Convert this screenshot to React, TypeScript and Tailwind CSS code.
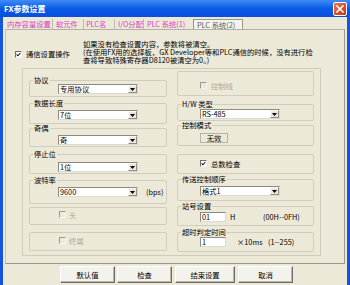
import React from "react";

const FONT = "font-['Noto_Sans_CJK_SC','Noto_Sans_CJK_JP',sans-serif]";

function CheckBox({ checked = false, disabled = false }: { checked?: boolean; disabled?: boolean }) {
  return (
    <span
      className={
        disabled
          ? "flex h-[7px] w-[7px] shrink-0 border border-t-[#9d9a8c] border-l-[#9d9a8c] border-b-[#f7f6f0] border-r-[#f7f6f0] bg-[#ebe9dd]"
          : "flex h-[7px] w-[7px] shrink-0 border border-t-[#6e6c64] border-l-[#6e6c64] border-b-[#f4f4f0] border-r-[#f4f4f0] bg-white"
      }
    >
      {checked && (
        <svg width="5" height="5" viewBox="0 0 5 5" className="block">
          <path d="M0.6 2.4 L1.9 3.8 L4.4 1" stroke="#111" strokeWidth="1.1" fill="none" />
        </svg>
      )}
    </span>
  );
}

function Combo({ value }: { value: string }) {
  return (
    <div className="flex h-[10px] w-[80px] border border-t-[#8c8a80] border-l-[#8c8a80] border-b-[#dcdad0] border-r-[#dcdad0] bg-white">
      <span className="flex-1 pl-[1px] text-[7.3px] leading-[8px] text-black">{value}</span>
      <span className="flex h-full w-[9px] items-center justify-center border border-t-[#fafaf6] border-l-[#fafaf6] border-b-[#8f8c80] border-r-[#8f8c80] bg-[#e9e7de]">
        <svg width="5" height="3" viewBox="0 0 5 3" className="block">
          <path d="M0 0H5L2.5 3Z" fill="#000" />
        </svg>
      </span>
    </div>
  );
}

function Legend({ children }: { children: React.ReactNode }) {
  return <legend className="ml-[3px] px-[1px] text-[7.3px] leading-[8px] text-black">{children}</legend>;
}

function Input({ value }: { value: string }) {
  return (
    <div className="h-[10px] w-[26px] border border-t-[#8c8a80] border-l-[#8c8a80] border-b-[#dcdad0] border-r-[#dcdad0] bg-white pl-[1px] text-[7.3px] leading-[8px] text-black">
      {value}
    </div>
  );
}

function Button({ label, w }: { label: string; w: string }) {
  return (
    <div
      className={`flex h-[17px] items-center justify-center border border-t-[#ffffff] border-l-[#ffffff] border-b-[#6f6d66] border-r-[#6f6d66] bg-[#f3f2ec] text-[7.3px] leading-[8px] text-black shadow-[inset_-1px_-1px_0_#b9b6aa] ${w}`}
    >
      {label}
    </div>
  );
}

export default function App() {
  return (
    <div className={`h-[285px] w-[350px] overflow-hidden bg-[#1555dc] ${FONT}`}>
      {/* Title bar */}
      <div className="flex h-[17px] items-center justify-between bg-linear-to-b from-[#3f8cf6] via-[#0a59e8] to-[#0550dc]">
        <span className="pl-[4px] text-[8px] font-bold leading-[10px] text-white">FX参数设置</span>
        <span className="mr-[3px] flex h-[14px] w-[14px] items-center justify-center rounded-[2px] border border-white bg-linear-to-br from-[#ec7a56] via-[#df4f2a] to-[#c43a18]">
          <svg width="8" height="8" viewBox="0 0 8 8" className="block">
            <path d="M1 1L7 7M7 1L1 7" stroke="#fff" strokeWidth="1.6" strokeLinecap="square" />
          </svg>
        </span>
      </div>

      {/* Body */}
      <div className="mx-[3px] h-[268px] bg-[#ece9d8]">
        {/* Tabs */}
        <div className="ml-[2px] flex h-[12px] items-stretch pt-[2px] text-[7.3px] leading-[10px] text-[#d43fbe]">
          <span className="w-[48px] border-r border-[#bdbab0] pl-[2px]">内存容量设置</span>
          <span className="w-[31px] border-r border-[#bdbab0] pl-[3px]">软元件</span>
          <span className="w-[31px] border-r border-[#bdbab0] pl-[2px]">PLC名</span>
          <span className="w-[29px] border-r border-[#bdbab0] pl-[3px]">I/O分配</span>
          <span className="w-[49px] pl-[3px]">PLC 系统(1)</span>
          <span className="w-[50px] border border-b-0 border-[#9a978c] bg-[#f4f3ec] pl-[3px] text-[#5a5a5a]">PLC 系统(2)</span>
        </div>

        {/* Tab panel */}
        <div className="ml-[2px] h-[235px] w-[340px] border border-t-[#b3b0a4] border-l-[#c9c6b9] border-b-[#9a978c] border-r-[#9a978c] pt-[11px]">
          <div className="flex h-[27px]">
            <div className="flex w-[77px] items-center gap-[4px] self-start pl-[9px] pt-[9px]">
              <CheckBox checked />
              <span className="text-[7.3px] leading-[8px] text-black">通信设置操作</span>
            </div>
            <div className="-mt-[1px] text-[7.3px] leading-[8px] text-black">
              <div>如果没有检查设置内容，参数将被清空。</div>
              <div>(在使用FX用的选择板，GX Developer等和PLC通信的时候，没有进行检</div>
              <div>查将导致特殊寄存器D8120被清空为0。)</div>
            </div>
          </div>

          {/* Outer frame */}
          <div className="ml-[16px] flex h-[188px] w-[299px] border border-[#cfccbe]">
            {/* Left column */}
            <div className="ml-[6px] flex w-[138px] flex-col">
              <fieldset className="mt-[7px] h-[21px] rounded-[2px] border border-[#d0cdbf]">
                <Legend>协议</Legend>
                <div className="pl-[28px]">
                  <Combo value="专用协议" />
                </div>
              </fieldset>
              <fieldset className="mt-[2px] h-[25px] rounded-[2px] border border-[#d0cdbf]">
                <Legend>数据长度</Legend>
                <div className="pl-[28px] pt-[3px]">
                  <Combo value="7位" />
                </div>
              </fieldset>
              <fieldset className="h-[23px] rounded-[2px] border border-[#d0cdbf]">
                <Legend>奇偶</Legend>
                <div className="pl-[28px] pt-[3px]">
                  <Combo value="奇" />
                </div>
              </fieldset>
              <fieldset className="mt-[3px] h-[24px] rounded-[2px] border border-[#d0cdbf]">
                <Legend>停止位</Legend>
                <div className="pl-[28px] pt-[4px]">
                  <Combo value="1位" />
                </div>
              </fieldset>
              <fieldset className="mt-[2px] h-[28px] rounded-[2px] border border-[#d0cdbf]">
                <Legend>波特率</Legend>
                <div className="flex items-center pl-[28px] pt-[3px]">
                  <Combo value="9600" />
                  <span className="ml-[8px] text-[7.3px] leading-[8px] text-black">(bps)</span>
                </div>
              </fieldset>
              <div className="mt-[3px] h-[18px] rounded-[2px] border border-[#d0cdbf] pl-[29px] pt-[3px]">
                <div className="flex h-[7px] items-center gap-[3px]">
                  <CheckBox disabled />
                  <span className="text-[7.3px] leading-[8px] text-[#aca899]">头</span>
                </div>
              </div>
              <div className="mt-[7px] h-[19px] rounded-[2px] border border-[#d0cdbf] pl-[29px] pt-[4px]">
                <div className="flex h-[7px] items-center gap-[3px]">
                  <CheckBox disabled />
                  <span className="text-[7.3px] leading-[8px] text-[#aca899]">终端</span>
                </div>
              </div>
            </div>

            {/* Right column */}
            <div className="ml-[10px] flex w-[137px] flex-col">
              <div className="mt-[2px] h-[25px] rounded-[2px] border border-[#d0cdbf] pl-[22px] pt-[10px]">
                <div className="flex h-[7px] items-center gap-[4px]">
                  <CheckBox disabled />
                  <span className="text-[7.3px] leading-[8px] text-[#aca899]">控制线</span>
                </div>
              </div>
              <fieldset className="mt-[4px] h-[21px] rounded-[2px] border border-[#d0cdbf]">
                <Legend>H/W 类型</Legend>
                <div className="pl-[22px] pt-[1px]">
                  <Combo value="RS-485" />
                </div>
              </fieldset>
              <fieldset className="h-[25px] rounded-[2px] border border-[#d0cdbf]">
                <Legend>控制模式</Legend>
                <div className="pl-[22px] pt-[4px]">
                  <div className="flex h-[10px] w-[28px] items-center justify-center border border-[#b5b2a6] text-[7.3px] leading-[8px] text-black">
                    无效
                  </div>
                </div>
              </fieldset>
              <div className="mt-[8px] h-[20px] rounded-[2px] border border-[#d0cdbf] pl-[22px] pt-[5px]">
                <div className="flex h-[7px] items-center gap-[4px]">
                  <CheckBox checked />
                  <span className="text-[7.3px] leading-[8px] text-black">总数检查</span>
                </div>
              </div>
              <fieldset className="mt-[1px] h-[26px] rounded-[2px] border border-[#d0cdbf]">
                <Legend>传送控制顺序</Legend>
                <div className="pl-[22px] pt-[3px]">
                  <Combo value="格式1" />
                </div>
              </fieldset>
              <fieldset className="mt-[1px] h-[24px] rounded-[2px] border border-[#d0cdbf]">
                <Legend>站号设置</Legend>
                <div className="flex items-center pl-[22px] pt-[2px] text-[7.3px] leading-[8px] text-black">
                  <Input value="01" />
                  <span className="w-[37px] pl-[4px]">H</span>
                  <span>(00H--0FH)</span>
                </div>
              </fieldset>
              <fieldset className="mt-[2px] h-[24px] rounded-[2px] border border-[#d0cdbf]">
                <Legend>超时判定时间</Legend>
                <div className="flex items-center pl-[22px] pt-[1px] text-[7.3px] leading-[8px] text-black">
                  <Input value="1" />
                  <span className="w-[42px] pl-[11px]">×10ms</span>
                  <span>(1--255)</span>
                </div>
              </fieldset>
            </div>
          </div>
        </div>

        {/* Buttons */}
        <div className="mt-[2px] flex">
          <div className="ml-[57px]">
            <Button label="默认值" w="w-[55px]" />
          </div>
          <div className="ml-[2px]">
            <Button label="检查" w="w-[55px]" />
          </div>
          <div className="ml-[3px]">
            <Button label="结束设置" w="w-[60px]" />
          </div>
          <div className="ml-[3px]">
            <Button label="取消" w="w-[55px]" />
          </div>
        </div>
      </div>
    </div>
  );
}
